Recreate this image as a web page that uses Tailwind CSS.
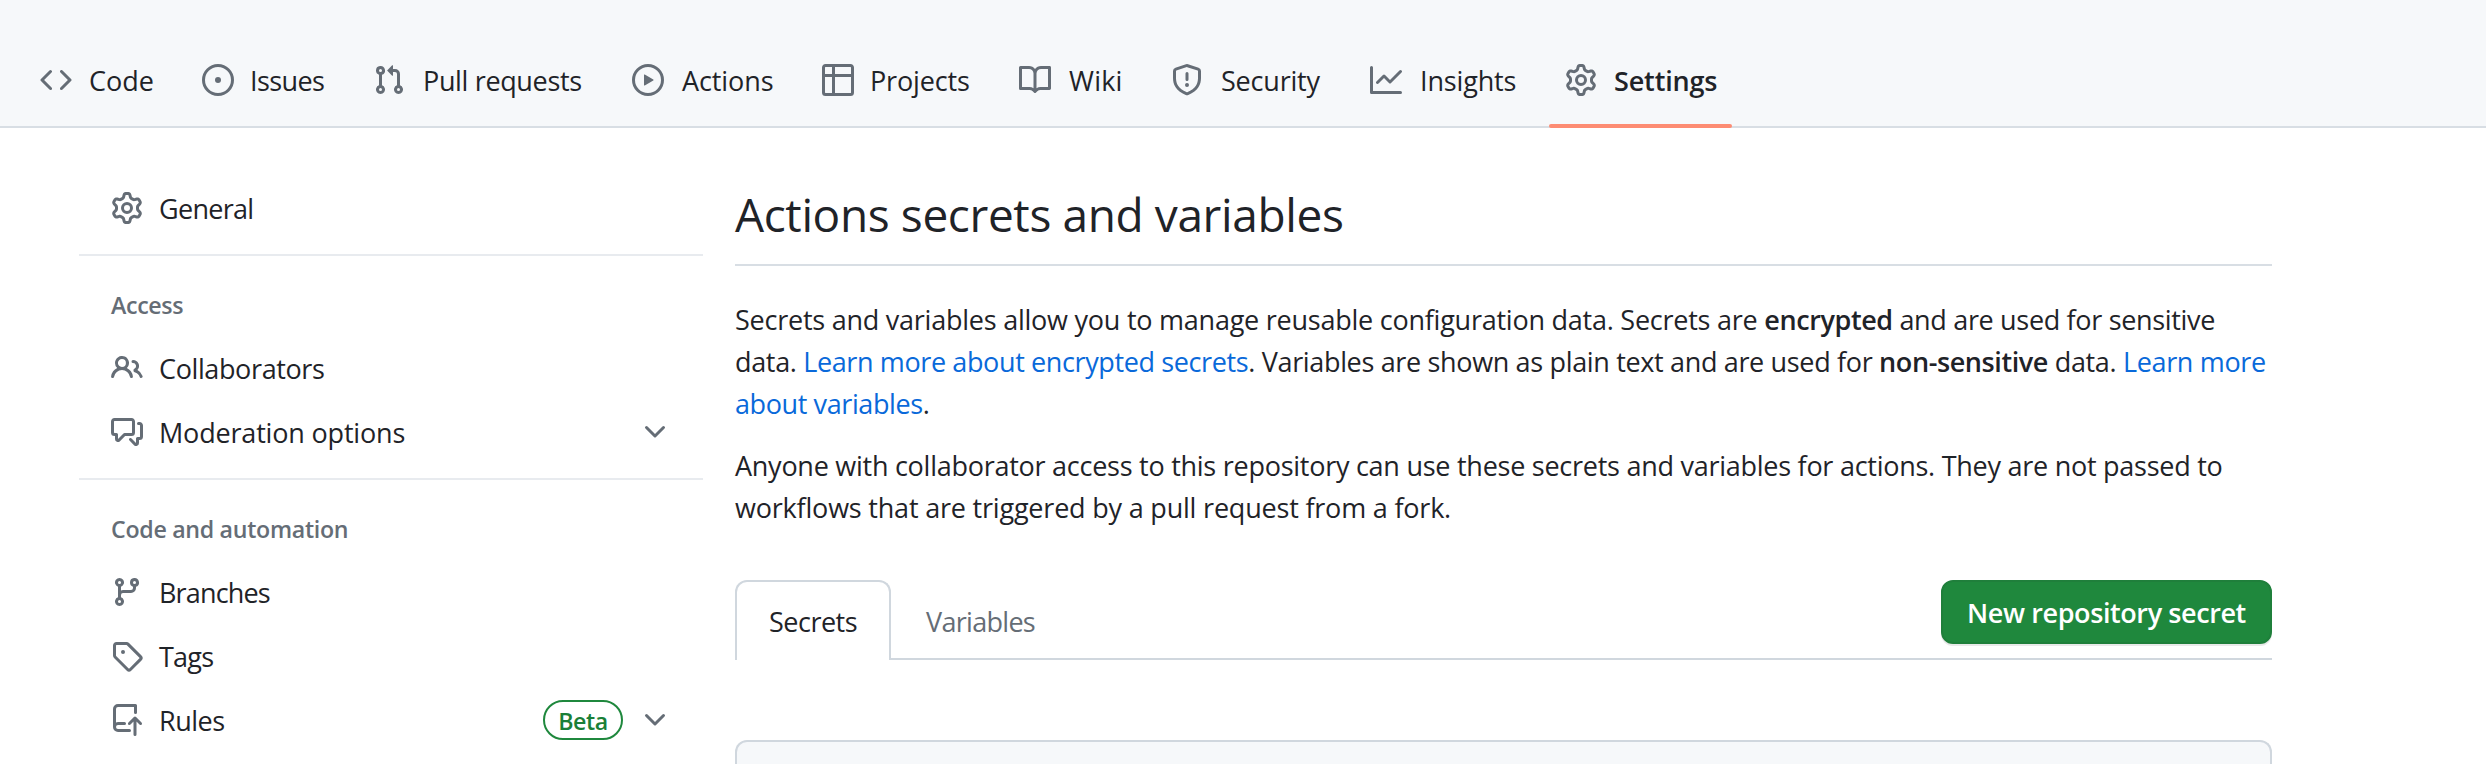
<!DOCTYPE html>
<html lang="en">
<head>
<meta charset="utf-8">
<title>Actions secrets and variables</title>
<script src="https://cdn.jsdelivr.net/npm/@tailwindcss/browser@4"></script>
</head>
<body class="h-[764px] overflow-hidden bg-white font-['Open_Sans',sans-serif] text-[27px] leading-[42px] text-[#1f2328] whitespace-nowrap">
<svg class="hidden">
<symbol id="gear" viewBox="0 0 16 16"><path d="M8 0a8.2 8.2 0 0 1 .701.031C9.444.095 9.99.645 10.16 1.29l.288 1.107c.018.066.079.158.212.224.231.114.454.243.668.386.123.082.233.09.299.071l1.103-.303c.644-.176 1.392.021 1.82.63.27.385.506.792.704 1.218.315.675.111 1.422-.364 1.891l-.814.806c-.049.048-.098.147-.088.294.016.257.016.515 0 .772-.01.147.038.246.088.294l.814.806c.475.469.679 1.216.364 1.891a7.977 7.977 0 0 1-.704 1.217c-.428.61-1.176.807-1.82.63l-1.102-.302c-.067-.019-.177-.011-.3.071a5.909 5.909 0 0 1-.668.386c-.133.066-.194.158-.211.224l-.29 1.106c-.168.646-.715 1.196-1.458 1.26a8.006 8.006 0 0 1-1.402 0c-.743-.064-1.289-.614-1.458-1.26l-.289-1.106c-.018-.066-.079-.158-.212-.224a5.738 5.738 0 0 1-.668-.386c-.123-.082-.233-.09-.299-.071l-1.103.303c-.644.176-1.392-.021-1.82-.63a8.12 8.12 0 0 1-.704-1.218c-.315-.675-.111-1.422.363-1.891l.815-.806c.05-.048.098-.147.088-.294a6.214 6.214 0 0 1 0-.772c.01-.147-.038-.246-.088-.294l-.815-.806C.635 6.045.431 5.298.746 4.623a7.92 7.92 0 0 1 .704-1.217c.428-.61 1.176-.807 1.82-.63l1.102.302c.067.019.177.011.3-.071.214-.143.437-.272.668-.386.133-.066.194-.158.211-.224l.29-1.106C6.009.645 6.556.095 7.299.03 7.53.01 7.764 0 8 0Zm-.571 1.525c-.036.003-.108.036-.137.146l-.289 1.105c-.147.561-.549.967-.998 1.189-.173.086-.34.183-.5.29-.417.278-.97.423-1.529.27l-1.103-.303c-.109-.03-.175.016-.195.045-.22.312-.412.644-.573.99-.014.031-.021.11.059.19l.815.806c.411.406.562.957.53 1.456a4.709 4.709 0 0 0 0 .582c.032.499-.119 1.05-.53 1.456l-.815.806c-.081.08-.073.159-.059.19.162.346.353.677.573.989.02.03.085.076.195.046l1.102-.303c.56-.153 1.113-.008 1.53.27.161.107.328.204.501.29.447.222.85.629.997 1.189l.289 1.105c.029.109.101.143.137.146a6.6 6.6 0 0 0 1.142 0c.036-.003.108-.036.137-.146l.289-1.105c.147-.561.549-.967.998-1.189.173-.086.34-.183.5-.29.417-.278.97-.423 1.529-.27l1.103.303c.109.029.175-.016.195-.045.22-.313.411-.644.573-.99.014-.031.021-.11-.059-.19l-.815-.806c-.411-.406-.562-.957-.53-1.456a4.709 4.709 0 0 0 0-.582c-.032-.499.119-1.05.53-1.456l.815-.806c.081-.08.073-.159.059-.19a6.464 6.464 0 0 0-.573-.989c-.02-.03-.085-.076-.195-.046l-1.102.303c-.56.153-1.113.008-1.53-.27a4.44 4.44 0 0 0-.501-.29c-.447-.222-.85-.629-.997-1.189l-.289-1.105c-.029-.11-.101-.143-.137-.146a6.6 6.6 0 0 0-1.142 0ZM11 8a3 3 0 1 1-6 0 3 3 0 0 1 6 0ZM9.5 8a1.5 1.5 0 1 0-3.001.001A1.5 1.5 0 0 0 9.5 8Z"/></symbol>
<symbol id="chevron" viewBox="0 0 16 16"><path d="M12.78 5.22a.749.749 0 0 1 0 1.06l-4.25 4.25a.749.749 0 0 1-1.06 0L3.22 6.28a.749.749 0 1 1 1.06-1.06L8 8.939l3.72-3.719a.749.749 0 0 1 1.06 0Z"/></symbol>
</svg>

<nav class="flex h-32 items-end gap-4 border-b-2 border-[#d8dee4] bg-[#f6f8fa] pl-6">
  <a class="flex h-[92px] items-center gap-4 px-4"><svg class="size-8 fill-[#656d76]" viewBox="0 0 16 16"><path d="m11.28 3.22 4.25 4.25a.75.75 0 0 1 0 1.06l-4.25 4.25a.749.749 0 0 1-1.275-.326.749.749 0 0 1 .215-.734L13.94 8l-3.72-3.72a.749.749 0 0 1 .326-1.275.749.749 0 0 1 .734.215Zm-6.56 0a.751.751 0 0 1 1.042.018.751.751 0 0 1 .018 1.042L2.06 8l3.72 3.72a.749.749 0 0 1-.326 1.275.749.749 0 0 1-.734-.215L.47 8.53a.75.75 0 0 1 0-1.06Z"/></svg><span class="w-[66px] pt-0.5 pl-px">Code</span></a>
  <a class="flex h-[92px] items-center gap-4 px-4"><svg class="size-8 fill-[#656d76]" viewBox="0 0 16 16"><path d="M8 9.5a1.5 1.5 0 1 0 0-3 1.5 1.5 0 0 0 0 3Z"/><path d="M8 0a8 8 0 1 1 0 16A8 8 0 0 1 8 0ZM1.5 8a6.5 6.5 0 1 0 13 0 6.5 6.5 0 0 0-13 0Z"/></svg><span class="w-[75px] pt-0.5 tracking-[-0.6px]">Issues</span></a>
  <a class="flex h-[92px] items-center gap-4 px-4"><svg class="size-8 fill-[#656d76]" viewBox="0 0 16 16"><path d="M1.5 3.25a2.25 2.25 0 1 1 3 2.122v5.256a2.251 2.251 0 1 1-1.5 0V5.372A2.25 2.25 0 0 1 1.5 3.25Zm5.677-.177L9.573.677A.25.25 0 0 1 10 .854V2.5h1A2.5 2.5 0 0 1 13.5 5v5.628a2.251 2.251 0 1 1-1.5 0V5a1 1 0 0 0-1-1h-1v1.646a.25.25 0 0 1-.427.177L7.177 3.427a.25.25 0 0 1 0-.354ZM3.75 2.5a.75.75 0 1 0 0 1.5.75.75 0 0 0 0-1.5Zm0 9.5a.75.75 0 1 0 0 1.5.75.75 0 0 0 0-1.5Zm8.25.75a.75.75 0 1 0 1.5 0 .75.75 0 0 0-1.5 0Z"/></svg><span class="w-[163px] pt-0.5 pl-0.5 tracking-[-0.35px]">Pull requests</span></a>
  <a class="flex h-[92px] items-center gap-4 px-4"><svg class="size-8 fill-[#656d76]" viewBox="0 0 16 16"><path d="M8 0a8 8 0 1 1 0 16A8 8 0 0 1 8 0ZM1.5 8a6.5 6.5 0 1 0 13 0 6.5 6.5 0 0 0-13 0Zm4.879-2.773 4.264 2.559a.25.25 0 0 1 0 .428l-4.264 2.559A.25.25 0 0 1 6 10.559V5.442a.25.25 0 0 1 .379-.215Z"/></svg><span class="w-[94px] pt-0.5 pl-0.5 tracking-[-0.1px]">Actions</span></a>
  <a class="flex h-[92px] items-center gap-4 px-4"><svg class="size-8 fill-[#656d76]" viewBox="0 0 16 16"><path d="M0 1.75C0 .784.784 0 1.75 0h12.5C15.216 0 16 .784 16 1.75v12.5A1.75 1.75 0 0 1 14.25 16H1.75A1.75 1.75 0 0 1 0 14.25ZM6.5 6.5v8h7.75a.25.25 0 0 0 .25-.25V6.5Zm8-1.5V1.75a.25.25 0 0 0-.25-.25H6.5V5Zm-13 1.5v7.75c0 .138.112.25.25.25H5v-8ZM5 5V1.5H1.75a.25.25 0 0 0-.25.25V5Z"/></svg><span class="w-[101px] pt-0.5 tracking-[-0.15px]">Projects</span></a>
  <a class="flex h-[92px] items-center gap-4 px-4"><svg class="size-8 fill-[#656d76]" viewBox="0 0 16 16"><path d="M0 1.75A.75.75 0 0 1 .75 1h4.253c1.227 0 2.317.59 3 1.501A3.743 3.743 0 0 1 11.006 1h4.245a.75.75 0 0 1 .75.75v10.5a.75.75 0 0 1-.75.75h-4.507a2.25 2.25 0 0 0-1.591.659l-.622.621a.75.75 0 0 1-1.06 0l-.622-.621A2.25 2.25 0 0 0 5.258 13H.75a.75.75 0 0 1-.75-.75Zm7.251 10.324.004-5.073-.002-2.253A2.25 2.25 0 0 0 5.003 2.5H1.5v9h3.757a3.75 3.75 0 0 1 1.994.574ZM8.755 4.75l-.004 7.322a3.752 3.752 0 0 1 1.992-.572H14.5v-9h-3.495a2.25 2.25 0 0 0-2.25 2.25Z"/></svg><span class="w-[56px] pt-0.5 pl-0.5 tracking-[0.2px]">Wiki</span></a>
  <a class="flex h-[92px] items-center gap-4 px-4"><svg class="size-8 fill-[#656d76]" viewBox="0 0 16 16"><path d="M7.467.133a1.748 1.748 0 0 1 1.066 0l5.25 1.68A1.75 1.75 0 0 1 15 3.48V7c0 1.566-.32 3.182-1.303 4.682-.983 1.498-2.585 2.813-5.032 3.855a1.697 1.697 0 0 1-1.33 0c-2.447-1.042-4.049-2.357-5.032-3.855C1.32 10.182 1 8.566 1 7V3.48a1.75 1.75 0 0 1 1.217-1.667Zm.61 1.429a.25.25 0 0 0-.153 0l-5.25 1.68a.25.25 0 0 0-.174.238V7c0 1.358.275 2.666 1.057 3.86.784 1.194 2.121 2.34 4.366 3.297a.196.196 0 0 0 .154 0c2.245-.956 3.582-2.104 4.366-3.298C13.225 9.666 13.5 8.36 13.5 7V3.48a.251.251 0 0 0-.174-.237l-5.25-1.68ZM8.75 4.75v3a.75.75 0 0 1-1.5 0v-3a.75.75 0 0 1 1.5 0ZM9 10.5a1 1 0 1 1-2 0 1 1 0 0 1 2 0Z"/></svg><span class="w-[103px] pt-0.5 pl-0.5 tracking-[-0.2px]">Security</span></a>
  <a class="flex h-[92px] items-center gap-4 px-4"><svg class="size-8 fill-[#656d76]" viewBox="0 0 16 16"><path d="M1.5 1.75V13.5h13.75a.75.75 0 0 1 0 1.5H.75a.75.75 0 0 1-.75-.75V1.75a.75.75 0 0 1 1.5 0Zm14.28 2.53-5.25 5.25a.75.75 0 0 1-1.06 0L7 7.06 4.28 9.78a.751.751 0 0 1-1.042-.018.751.751 0 0 1-.018-1.042l3.25-3.25a.75.75 0 0 1 1.06 0L10 7.94l4.72-4.72a.751.751 0 0 1 1.042.018.751.751 0 0 1 .018 1.042Z"/></svg><span class="w-[99px] pt-0.5 pl-0.5 tracking-[-0.15px]">Insights</span></a>
  <a class="relative flex h-[92px] items-center gap-4 px-4 font-semibold"><svg class="size-8 fill-[#656d76]"><use href="#gear"/></svg><span class="w-[104px] pt-0.5 pl-px tracking-[-0.15px]">Settings</span><span class="absolute left-0 right-px -bottom-0.5 h-1 rounded-sm bg-[#fd8c73]"></span></a>
</nav>

<div class="flex gap-8 pl-[79px]">
  <aside class="w-[624px] pt-12">
    <a class="flex h-16 items-center gap-4 pl-8"><svg class="size-8 fill-[#656d76]"><use href="#gear"/></svg><span class="pt-0.5 tracking-[-0.7px]">General</span></a>
    <div class="mt-3.5 h-0.5 bg-[#e8ebef]"></div>
    <h3 class="flex h-20 items-center pt-[17px] pl-8 text-[23.2px] font-semibold tracking-[-0.35px] text-[#656d76]">Access</h3>
    <a class="flex h-16 items-center gap-4 pl-8"><svg class="size-8 fill-[#656d76]" viewBox="0 0 16 16"><path d="M2 5.5a3.5 3.5 0 1 1 5.898 2.549 5.508 5.508 0 0 1 3.034 4.084.75.75 0 1 1-1.482.235 4 4 0 0 0-7.9 0 .75.75 0 0 1-1.482-.236A5.507 5.507 0 0 1 3.102 8.05 3.493 3.493 0 0 1 2 5.5ZM11 4a3.001 3.001 0 0 1 2.22 5.018 5.01 5.01 0 0 1 2.56 3.012.749.749 0 0 1-.885.954.752.752 0 0 1-.549-.514 3.507 3.507 0 0 0-2.522-2.372.75.75 0 0 1-.574-.73v-.352a.75.75 0 0 1 .416-.672A1.5 1.5 0 0 0 11 5.5.75.75 0 0 1 11 4Zm-5.5-.5a2 2 0 1 0-.001 3.999A2 2 0 0 0 5.5 3.5Z"/></svg><span class="pt-0.5 tracking-[-0.38px]">Collaborators</span></a>
    <a class="flex h-16 items-center gap-4 pr-8 pl-8"><svg class="size-8 fill-[#656d76]" viewBox="0 0 16 16"><path d="M1.75 1h8.5c.966 0 1.75.784 1.75 1.75v5.5A1.75 1.75 0 0 1 10.25 10H7.061l-2.574 2.573A1.458 1.458 0 0 1 2 11.543V10h-.25A1.75 1.75 0 0 1 0 8.25v-5.5C0 1.784.784 1 1.75 1ZM1.5 2.75v5.5c0 .138.112.25.25.25h1a.75.75 0 0 1 .75.75v2.19l2.72-2.72a.749.749 0 0 1 .53-.22h3.5a.25.25 0 0 0 .25-.25v-5.5a.25.25 0 0 0-.25-.25h-8.5a.25.25 0 0 0-.25.25Zm13 2a.25.25 0 0 0-.25-.25h-.5a.75.75 0 0 1 0-1.5h.5c.966 0 1.75.784 1.75 1.75v5.5A1.75 1.75 0 0 1 14.25 12H14v1.543a1.458 1.458 0 0 1-2.487 1.03L9.22 12.28a.749.749 0 0 1 .326-1.275.749.749 0 0 1 .734.215l2.22 2.22v-2.19a.75.75 0 0 1 .75-.75h1a.25.25 0 0 0 .25-.25Z"/></svg><span class="grow pt-0.5 tracking-[-0.18px]">Moderation options</span><svg class="size-8 fill-[#656d76]"><use href="#chevron"/></svg></a>
    <div class="mt-3.5 h-0.5 bg-[#e8ebef]"></div>
    <h3 class="flex h-20 items-center pt-[17px] pl-8 text-[23.2px] font-semibold tracking-[-0.3px] text-[#656d76]">Code and automation</h3>
    <a class="flex h-16 items-center gap-4 pl-8"><svg class="size-8 fill-[#656d76]" viewBox="0 0 16 16"><path d="M9.5 3.25a2.25 2.25 0 1 1 3 2.122V6A2.5 2.5 0 0 1 10 8.5H6a1 1 0 0 0-1 1v1.128a2.251 2.251 0 1 1-1.5 0V5.372a2.25 2.25 0 1 1 1.5 0v1.836A2.493 2.493 0 0 1 6 7h4a1 1 0 0 0 1-1v-.628A2.25 2.25 0 0 1 9.5 3.25Zm-6 0a.75.75 0 1 0 1.5 0 .75.75 0 0 0-1.5 0Zm8.25-.75a.75.75 0 1 0 0 1.5.75.75 0 0 0 0-1.5ZM4.25 12a.75.75 0 1 0 0 1.5.75.75 0 0 0 0-1.5Z"/></svg><span class="pt-0.5 tracking-[-0.85px]">Branches</span></a>
    <a class="flex h-16 items-center gap-4 pl-8"><svg class="size-8 fill-[#656d76]" viewBox="0 0 16 16"><path d="M1 7.775V2.75C1 1.784 1.784 1 2.75 1h5.025c.464 0 .91.184 1.238.513l6.25 6.25a1.75 1.75 0 0 1 0 2.474l-5.026 5.026a1.75 1.75 0 0 1-2.474 0l-6.25-6.25A1.752 1.752 0 0 1 1 7.775Zm1.5 0c0 .066.026.13.073.177l6.25 6.25a.25.25 0 0 0 .354 0l5.025-5.025a.25.25 0 0 0 0-.354l-6.25-6.25a.25.25 0 0 0-.177-.073H2.75a.25.25 0 0 0-.25.25ZM6 5a1 1 0 1 1 0 2 1 1 0 0 1 0-2Z"/></svg><span class="pt-0.5 tracking-[-0.8px]">Tags</span></a>
    <a class="flex h-16 items-center gap-4 pr-8 pl-8"><svg class="size-8 fill-[#656d76]" viewBox="0 0 16 16"><path d="M1 2.5A2.5 2.5 0 0 1 3.5 0h8.75a.75.75 0 0 1 .75.75v3.5a.75.75 0 0 1-1.5 0V1.5h-8a1 1 0 0 0-1 1v6.708A2.493 2.493 0 0 1 3.5 9h3.25a.75.75 0 0 1 0 1.5H3.5a1 1 0 0 0 0 2h5.75a.75.75 0 0 1 0 1.5H3.5A2.5 2.5 0 0 1 1 11.5Zm13.23 7.79-1.48-1.48v6.44a.75.75 0 0 1-1.5 0V8.81L9.77 10.29a.749.749 0 0 1-1.275-.326.749.749 0 0 1 .215-.734l2.75-2.75a.75.75 0 0 1 1.06 0l2.75 2.75a.749.749 0 0 1-.326 1.275.749.749 0 0 1-.734-.215Z"/></svg><span class="grow pt-0.5 tracking-[-0.5px]">Rules</span><span class="flex h-10 w-20 items-center justify-center rounded-full border-2 border-[#1f883d] pt-0.5 text-[23.2px] font-semibold tracking-[-0.4px] text-[#1a7f37]">Beta</span><svg class="size-8 fill-[#656d76]"><use href="#chevron"/></svg></a>
  </aside>

  <main class="w-[1537px] pt-[52px]">
    <h1 class="h-[86px] border-b-2 border-[#d8dee4] pt-0.5 text-[46px] leading-[64px] tracking-[-0.38px]">Actions secrets and variables</h1>
    <p class="mt-[33px] tracking-[-0.26px]"><span class="tracking-[-0.24px]">Secrets and variables allow you to manage reusable configuration data. Secrets are </span><b class="font-semibold tracking-[-0.4px]">encrypted</b><span class="tracking-[-0.33px]"> and are used for sensitive</span><br><span class="tracking-[-0.34px]">data. <a class="text-[#0969da] tracking-[-0.38px]">Learn more about encrypted secrets</a>. Variables are shown as plain text and are used for <b class="font-semibold tracking-[-0.4px]">non-sensitive</b> data. <a class="text-[#0969da]">Learn more</a></span><br><a class="text-[#0969da] tracking-[-0.4px]">about variables</a>.</p>
    <p class="mt-5 tracking-[-0.26px]">Anyone with collaborator access to this repository can use these secrets and variables for actions. They are not passed to<br><span class="tracking-[-0.2px]">workflows that are triggered by a pull request from a fork.</span></p>
    <div class="mt-[51px] flex h-20 items-start border-b-2 border-[#d0d7de]">
      <a class="flex h-20 w-[156px] items-center rounded-t-xl border-2 border-b-0 border-[#d0d7de] bg-white pt-0.5 pl-8 tracking-[-0.5px]">Secrets</a>
      <a class="flex h-20 items-center pt-1 pl-[35px] tracking-[-0.7px] text-[#656d76]">Variables</a>
      <button class="ml-auto flex h-16 w-[331px] items-center justify-center rounded-xl border-2 border-[#1f7f3b] bg-[#1f883d] pt-0.5 font-semibold tracking-[-0.4px] text-white shadow-[0_2px_0_rgba(31,35,40,0.1)]">New repository secret</button>
    </div>
    <div class="mt-20 h-6 rounded-t-xl border-2 border-b-0 border-[#d0d7de] bg-[#f6f8fa]"></div>
  </main>
</div>
</body>
</html>
